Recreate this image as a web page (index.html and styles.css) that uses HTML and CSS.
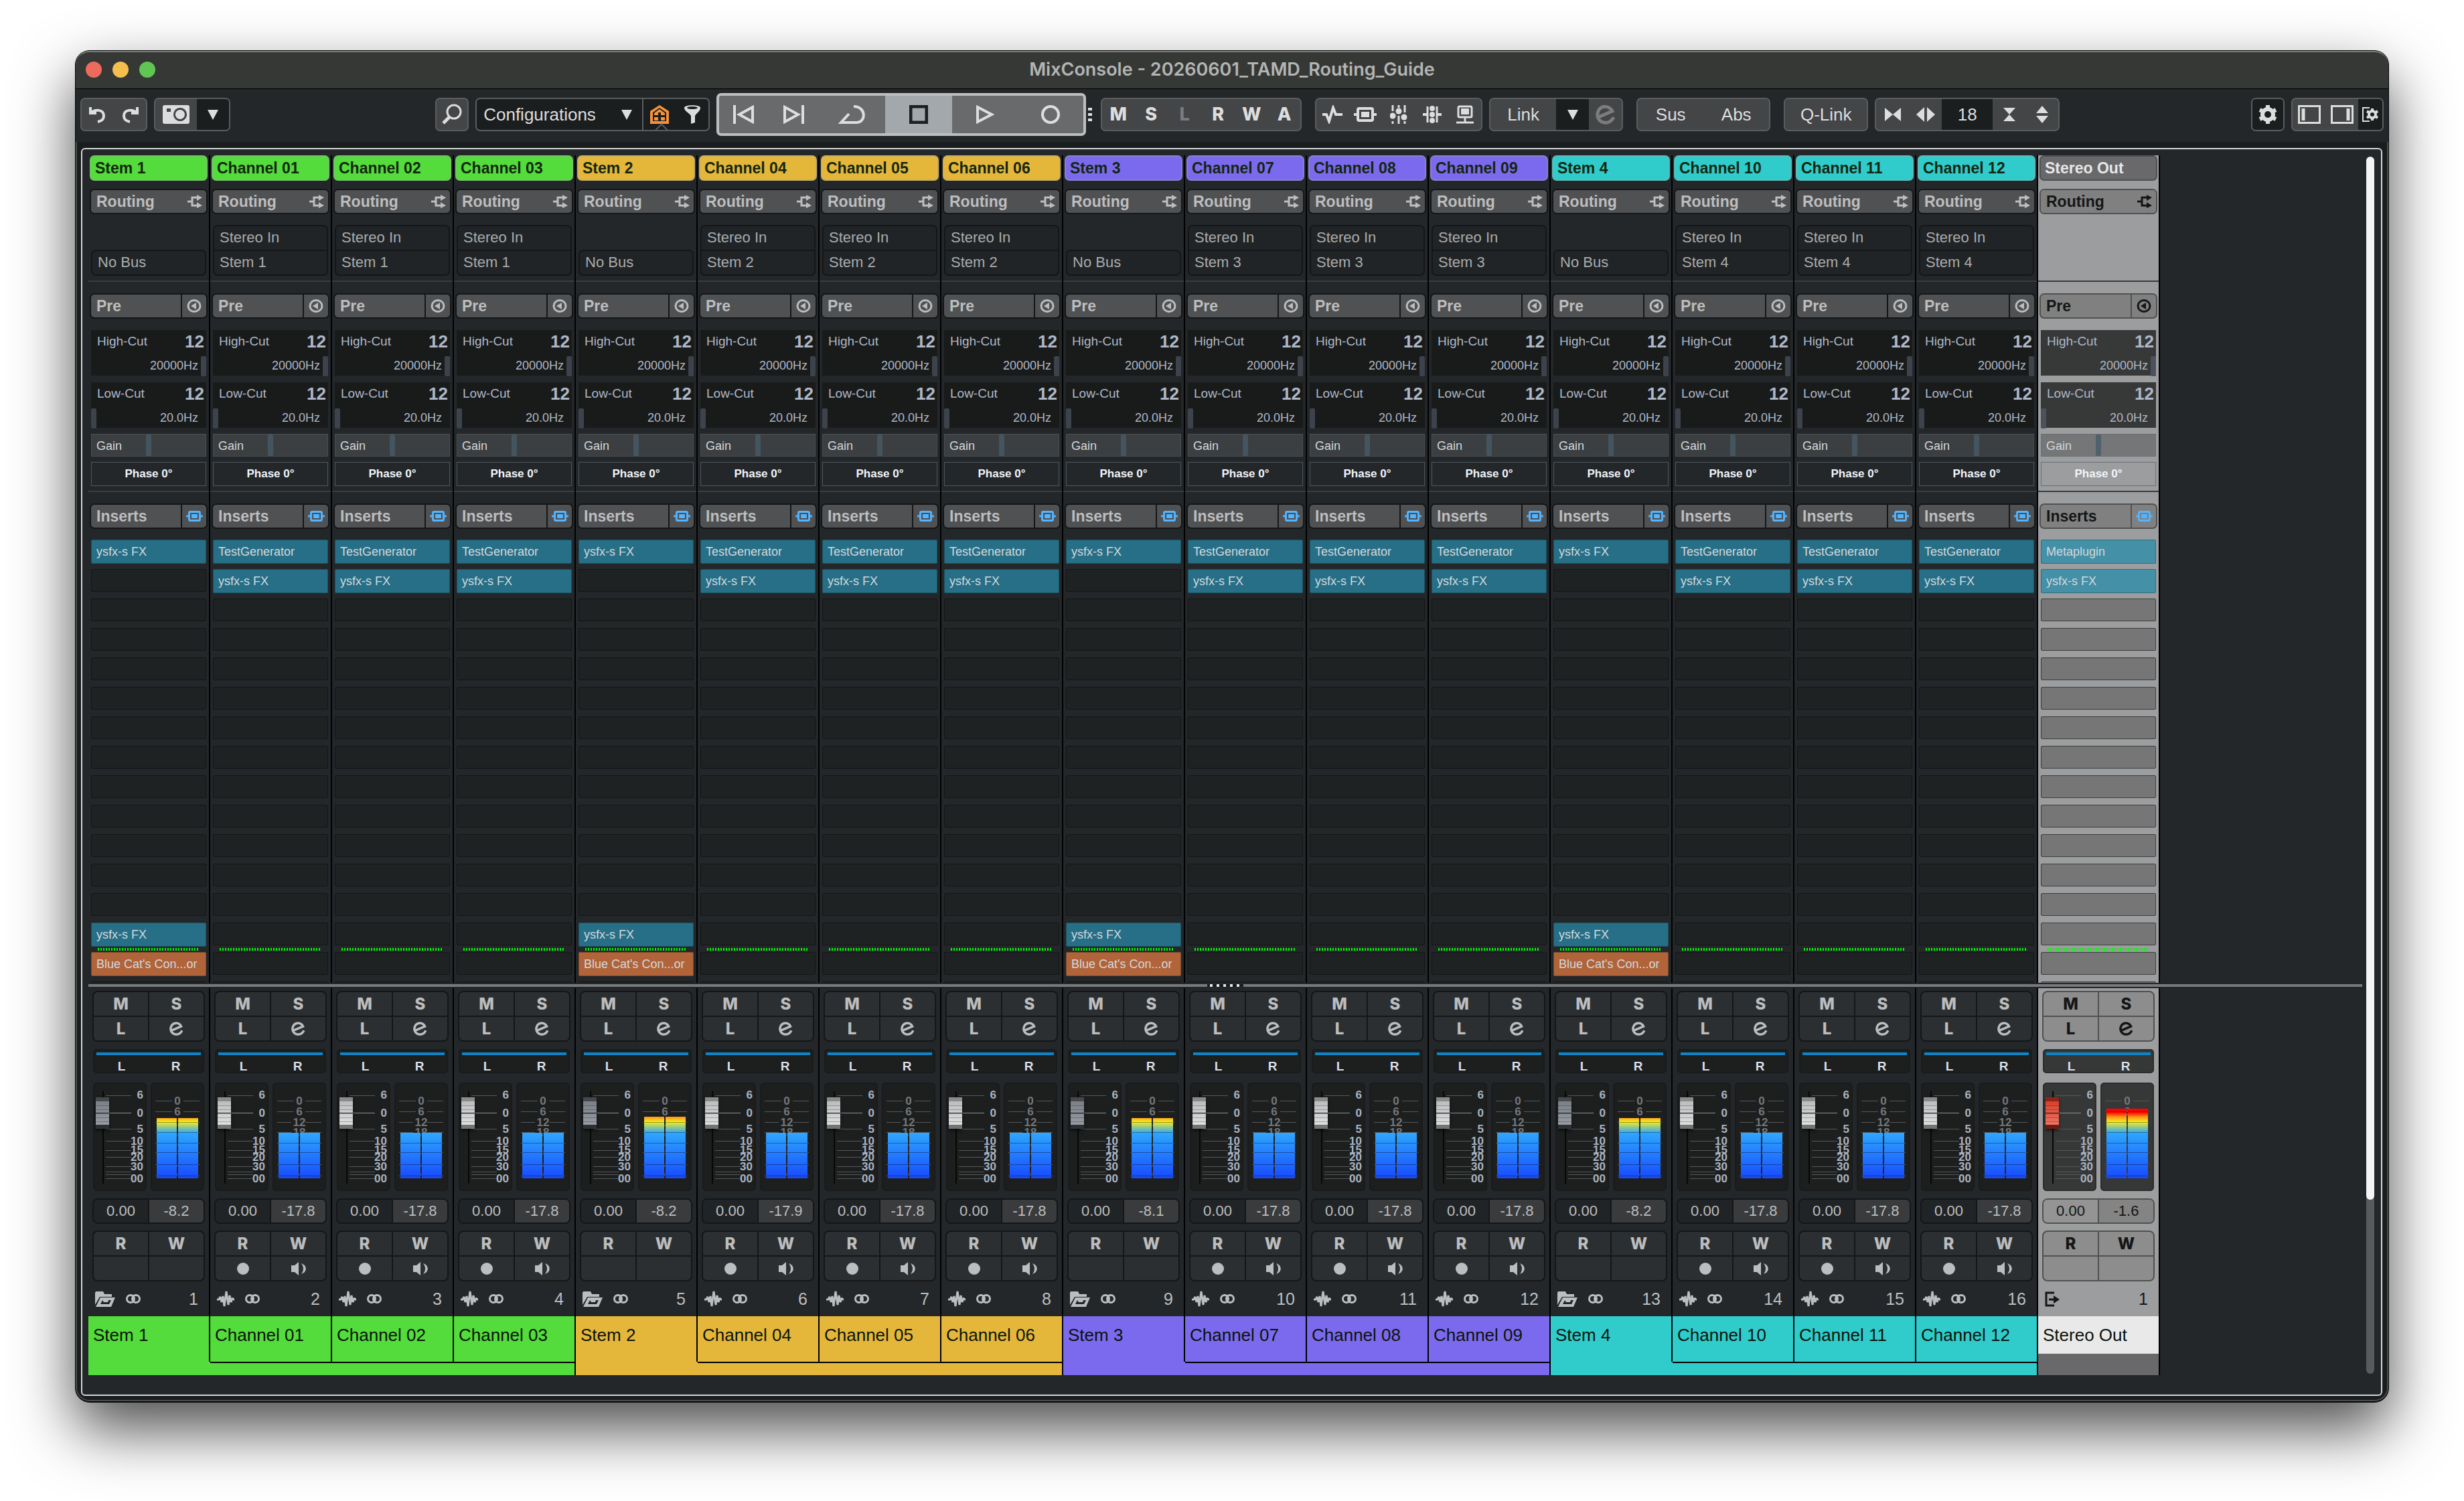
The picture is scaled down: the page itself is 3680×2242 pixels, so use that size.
FILE: index.html
```html
<!DOCTYPE html>
<html lang="en">
<head>
  <meta charset="UTF-8" />
  <meta name="viewport" content="width=device-width, initial-scale=1.0" />
  <title>MixConsole</title>
  <link rel="stylesheet" href="styles.css">
</head>
<body>
  <svg class="defs" aria-hidden="true">
    <defs>
      <linearGradient id="level" gradientUnits="userSpaceOnUse" x1="0" y1="143" x2="0" y2="39">
        <stop offset="0" stop-color="#174bff"/>
        <stop offset=".65" stop-color="#2ea6ff"/>
        <stop offset=".74" stop-color="#9acb84"/>
        <stop offset=".81" stop-color="#f4ee20"/>
        <stop offset=".88" stop-color="#ff9614"/>
        <stop offset=".95" stop-color="#ff0000"/>
      </linearGradient>
    </defs>
    <symbol id="i-undo" viewBox="0 0 26 26"><path d="M2 2v9h9M3 10C9 5 22 5 22 15c0 5-4 8-9 9" fill="none" stroke="currentColor" stroke-width="4"/></symbol>
    <symbol id="i-redo" viewBox="0 0 26 26"><path d="M24 2v9h-9M23 10C17 5 4 5 4 15c0 5 4 8 9 9" fill="none" stroke="currentColor" stroke-width="4"/></symbol>
    <symbol id="i-camera" viewBox="0 0 40 28"><path fill="currentColor" fill-rule="evenodd" d="M3 0h34a3 3 0 0 1 3 3v22a3 3 0 0 1-3 3H3a3 3 0 0 1-3-3V3a3 3 0 0 1 3-3zM6 5v5h6V5zM26 4a10 10 0 1 0 .1 0zM26 7a7 7 0 1 1-.1 0z"/></symbol>
    <symbol id="i-down" viewBox="0 0 16 15"><path d="M0 0h16L8 15z" fill="currentColor"/></symbol>
    <symbol id="i-search" viewBox="0 0 32 32"><circle cx="19" cy="12" r="10" fill="none" stroke="currentColor" stroke-width="3"/><path d="M12 20L3 29" stroke="currentColor" stroke-width="5"/></symbol>
    <symbol id="i-house" viewBox="0 0 28 28"><path fill="currentColor" fill-rule="evenodd" d="M14 0l14 9v19H0V9zM14 4L4 11v13h20V11z"/><path d="M14 6l8 6v3h-6v-4h-4v4H6v-3zM6 18h6v5H6zM16 18h6v5h-6z" fill="currentColor"/></symbol>
    <symbol id="i-funnel" viewBox="0 0 24 28"><path d="M0 4C0-1 24-1 24 4c0 5-6 8-8 12v10l-6 2V16C8 12 0 9 0 4z" fill="currentColor"/><ellipse cx="12" cy="4" rx="8" ry="2" fill="#1b1e1f"/></symbol>
    <symbol id="i-prev" viewBox="0 0 32 28"><path d="M2 0v28M29 3v22L9 14z" fill="none" stroke="currentColor" stroke-width="4"/></symbol>
    <symbol id="i-next" viewBox="0 0 32 28"><path d="M30 0v28M3 3v22l20-11z" fill="none" stroke="currentColor" stroke-width="4"/></symbol>
    <symbol id="i-loop" viewBox="0 0 40 28"><path d="M23 2c19 0 19 24 4 24H4l12-13" fill="none" stroke="currentColor" stroke-width="4"/></symbol>
    <symbol id="i-stop" viewBox="0 0 28 28"><path d="M2 2h24v24H2z" fill="none" stroke="#1d1f20" stroke-width="5"/></symbol>
    <symbol id="i-play" viewBox="0 0 28 28"><path d="M3 3v22l21-11z" fill="none" stroke="currentColor" stroke-width="4"/></symbol>
    <symbol id="i-rec" viewBox="0 0 28 28"><circle cx="14" cy="14" r="12" fill="none" stroke="currentColor" stroke-width="4"/></symbol>
    <symbol id="i-pulse" viewBox="0 0 30 28"><path d="M0 14h6l4 10 6-20 4 10h10" fill="none" stroke="currentColor" stroke-width="4"/></symbol>
    <symbol id="i-insert" viewBox="0 0 34 22"><path d="M0 11h5M29 11h5" stroke="currentColor" stroke-width="4"/><rect x="6" y="2" width="22" height="18" rx="2" fill="none" stroke="currentColor" stroke-width="4"/><path d="M11 7h12v8H11z" fill="currentColor"/></symbol>
    <symbol id="i-faders" viewBox="0 0 26 28"><path d="M4 0v9M4 24v4M13 0v4M13 16v12M22 0v11M22 24v4" stroke="currentColor" stroke-width="3"/><circle cx="4" cy="16" r="4.500" fill="currentColor"/><circle cx="13" cy="9" r="4.500" fill="currentColor"/><circle cx="21" cy="18" r="4.500" fill="currentColor"/></symbol>
    <symbol id="i-strip" viewBox="0 0 28 26"><path d="M0 13h7M21 13h7" stroke="currentColor" stroke-width="4"/><path d="M7 1v24M21 1v24" stroke="currentColor" stroke-width="3"/><circle cx="14" cy="4" r="4" fill="currentColor"/><circle cx="14" cy="13" r="4" fill="currentColor"/><circle cx="14" cy="22" r="4" fill="currentColor"/></symbol>
    <symbol id="i-rackmount" viewBox="0 0 26 28"><rect x="3" y="2" width="20" height="16" rx="2" fill="none" stroke="currentColor" stroke-width="3"/><path d="M7 5h12v9H7z" fill="currentColor"/><path d="M13 18v8M0 26h26" stroke="currentColor" stroke-width="3"/></symbol>
    <symbol id="i-e" viewBox="0 0 30 30"><path d="M4 19L25 10C21 2 10 1 5 8c-5 8-1 18 8 19 6 1 11-2 14-8" fill="none" stroke="currentColor" stroke-width="5"/></symbol>
    <symbol id="i-hin" viewBox="0 0 26 20"><path d="M1 0v20l12-10L25 20V0L13 10z" fill="currentColor"/></symbol>
    <symbol id="i-hout" viewBox="0 0 28 22"><path d="M12 0v22L0 11zM16 0v22l12-11z" fill="currentColor"/></symbol>
    <symbol id="i-vin" viewBox="0 0 18 22"><path d="M0 1h18L9 11zM0 21h18L9 11z" fill="currentColor"/></symbol>
    <symbol id="i-vout" viewBox="0 0 18 26"><path d="M0 11h18L9 0zM0 15h18L9 26z" fill="currentColor"/></symbol>
    <symbol id="i-gear" viewBox="0 0 28 28"><circle cx="14" cy="14" r="8" fill="none" stroke="currentColor" stroke-width="6"/><path d="M14 0v5M14 23v5M2 7l4 2M22 19l4 2M2 21l4-2M22 9l4-2" stroke="currentColor" stroke-width="6"/></symbol>
    <symbol id="i-paneleft" viewBox="0 0 34 28"><path d="M1.500 1.500h31v25h-31z" fill="none" stroke="currentColor" stroke-width="3"/><path d="M8 5v18" stroke="currentColor" stroke-width="5"/></symbol>
    <symbol id="i-paneright" viewBox="0 0 34 28"><path d="M1.500 1.500h31v25h-31z" fill="none" stroke="currentColor" stroke-width="3"/><path d="M26 5v18" stroke="currentColor" stroke-width="5"/></symbol>
    <symbol id="i-panegear" viewBox="0 0 24 22"><path d="M11 1H1v20h10" fill="none" stroke="currentColor" stroke-width="2"/><circle cx="15" cy="11" r="5" fill="none" stroke="currentColor" stroke-width="4"/><path d="M15 2v3M15 17v3M7 6l3 2M20 14l3 2M7 16l3-2M20 8l3-2" stroke="currentColor" stroke-width="4"/></symbol>
    <symbol id="i-routing" viewBox="0 0 22 20"><path d="M0 10h7M16 4H7v12h9" fill="none" stroke="currentColor" stroke-width="3"/><path d="M14 0l8 4-8 5zM14 11l8 5-8 4z" fill="currentColor"/></symbol>
    <symbol id="i-pre" viewBox="0 0 22 20"><ellipse cx="11" cy="10" rx="9" ry="8.500" fill="none" stroke="currentColor" stroke-width="3"/><path d="M14 5v10l-8-5z" fill="currentColor"/></symbol>
    <symbol id="i-folder" viewBox="0 0 30 23"><path d="M1 0h11l2 4h11v4H7L0 20V2z" fill="currentColor"/><path fill="currentColor" fill-rule="evenodd" d="M8 9h22l-6 14H1zM11 13l-3 6h13l3-6h-4l-1 3h-6z"/></symbol>
    <symbol id="i-stereo" viewBox="0 0 22 14"><circle cx="7" cy="7" r="5.500" fill="none" stroke="currentColor" stroke-width="3"/><circle cx="15" cy="7" r="5.500" fill="none" stroke="currentColor" stroke-width="3"/></symbol>
    <symbol id="i-wave" viewBox="0 0 26 24"><path d="M0 13h3l2-4 2 8 2-9 2 15 3-22 3 20 2-14 2 10 2-6 2 2h1" fill="none" stroke="currentColor" stroke-width="3" stroke-linejoin="bevel"/></symbol>
    <symbol id="i-dot" viewBox="0 0 18 18"><circle cx="9" cy="9" r="9" fill="currentColor"/></symbol>
    <symbol id="i-speaker" viewBox="0 0 22 20"><path d="M0 5h5l6-5v20l-6-5H0zM15 2c9 3 9 13 0 16 4-5 4-11 0-16z" fill="currentColor"/></symbol>
    <symbol id="i-out" viewBox="0 0 22 23"><path d="M14 2H2v19h12M6 12h9" fill="none" stroke="currentColor" stroke-width="3"/><path d="M13 6l9 6-9 6z" fill="currentColor"/></symbol>
  </svg>

  <main class="window">
    <header class="titlebar">
      <div class="lights">
        <button class="light close" aria-label="Close"></button>
        <button class="light minimize" aria-label="Minimize"></button>
        <button class="light zoom" aria-label="Zoom"></button>
      </div>
      <h1>MixConsole - 20260601_TAMD_Routing_Guide</h1>
    </header>

    <nav class="toolbar">
      <div class="group w50">
        <button aria-label="Undo"><svg width="26" height="26"><use href="#i-undo"/></svg></button>
        <button aria-label="Redo"><svg width="26" height="26"><use href="#i-redo"/></svg></button>
      </div>
      <div class="group snapshots">
        <button class="camera" aria-label="Snapshot"><svg width="40" height="28"><use href="#i-camera"/></svg></button>
        <button class="dark" aria-label="Snapshots"><svg width="16" height="15"><use href="#i-down"/></svg></button>
      </div>
      <div class="space left"></div>
      <div class="group w50"><button aria-label="Find channel"><svg width="32" height="32"><use href="#i-search"/></svg></button></div>
      <div class="group config">
        <select aria-label="Configurations"><option>Configurations</option></select>
        <svg class="arrow" width="16" height="15"><use href="#i-down"/></svg>
        <button class="house" aria-label="Agents"><svg width="28" height="28"><use href="#i-house"/></svg></button>
        <button aria-label="Filter"><svg width="24" height="28"><use href="#i-funnel"/></svg></button>
      </div>
      <div class="transport">
        <button class="step" aria-label="Previous"><svg width="32" height="28"><use href="#i-prev"/></svg></button>
        <button class="step" aria-label="Next"><svg width="32" height="28"><use href="#i-next"/></svg></button>
        <button class="wide" aria-label="Cycle"><svg width="40" height="28"><use href="#i-loop"/></svg></button>
        <button class="wide on" aria-label="Stop"><svg width="28" height="28"><use href="#i-stop"/></svg></button>
        <button aria-label="Play"><svg width="28" height="28"><use href="#i-play"/></svg></button>
        <button aria-label="Record"><svg width="28" height="28"><use href="#i-rec"/></svg></button>
      </div>
      <div class="grip"><i></i><i></i><i></i></div>
      <div class="group w50 letters">
        <button>M</button><button>S</button><button class="off">L</button><button>R</button><button>W</button><button>A</button>
      </div>
      <div class="group w50 gap20">
        <button aria-label="Pulse"><svg width="30" height="28"><use href="#i-pulse"/></svg></button>
        <button aria-label="Bypass inserts"><svg width="34" height="22"><use href="#i-insert"/></svg></button>
        <button aria-label="Bypass EQ"><svg width="26" height="28"><use href="#i-faders"/></svg></button>
        <button aria-label="Bypass strip"><svg width="28" height="26"><use href="#i-strip"/></svg></button>
        <button aria-label="Bypass sends"><svg width="26" height="28"><use href="#i-rackmount"/></svg></button>
      </div>
      <div class="group link">
        <button class="text">Link</button>
        <button class="dark" aria-label="Link settings"><svg width="16" height="15"><use href="#i-down"/></svg></button>
        <button class="off" aria-label="Edit"><svg width="30" height="30"><use href="#i-e"/></svg></button>
      </div>
      <div class="group gap20 sus"><button class="text">Sus</button><button class="text">Abs</button></div>
      <div class="group gap20 qlink"><button class="text">Q-Link</button></div>
      <div class="group width">
        <button aria-label="Narrower"><svg width="26" height="20"><use href="#i-hin"/></svg></button>
        <button aria-label="Wider"><svg width="28" height="22"><use href="#i-hout"/></svg></button>
        <input type="text" value="18" aria-label="Channel width">
        <button aria-label="Shrink rack"><svg width="18" height="22"><use href="#i-vin"/></svg></button>
        <button aria-label="Grow rack"><svg width="18" height="26"><use href="#i-vout"/></svg></button>
      </div>
      <div class="space right"></div>
      <div class="group w50"><button class="dark" aria-label="Settings"><svg width="28" height="28"><use href="#i-gear"/></svg></button></div>
      <div class="group panes">
        <button aria-label="Left zone"><svg width="34" height="28"><use href="#i-paneleft"/></svg></button>
        <button aria-label="Right zone"><svg width="34" height="28"><use href="#i-paneright"/></svg></button>
        <button class="dark" aria-label="Set up window layout"><svg width="24" height="22"><use href="#i-panegear"/></svg></button>
      </div>
    </nav>

    <section class="console">
      <div class="mixer">
        <div class="row racks" id="racks"></div>
        <div class="divider"><span></span></div>
        <div class="row" id="faders"></div>
      </div>
      <div class="scrollbar"><div class="thumb"></div></div>
    </section>
  </main>
  <script src="script.js"></script>
</body>
</html>
```
FILE: styles.css
```css
* {
  box-sizing: border-box;
}
body {
  min-height: 100vh;
  margin: 0;
  padding: 75px 112px 0;
  background: #fff;
  font-family: "Liberation Sans", Arial, sans-serif;
}
button, input, select {
  margin: 0;
  padding: 0;
  border: 0;
  border-radius: 0;
  background: none;
  color: inherit;
  font: inherit;
  appearance: none;
}
svg {
  display: block;
  flex: none;
}
.defs {
  position: absolute;
  width: 0;
  height: 0;
}

/* window */
.window {
  padding-bottom: 8px;
  border: 1px solid #050606;
  border-bottom-width: 2px;
  border-radius: 22px;
  background: #1a1d1e;
  box-shadow: inset 0 2px 1px #7f837f, inset 0 0 0 2px #4a4d4e, 0 40px 90px rgba(0, 0, 0, 0.7);
}
.titlebar {
  position: relative;
  display: flex;
  align-items: center;
  height: 57px;
  padding: 0 0 2px 15px;
  border-top: 2px solid #7b7f7b;
  border-bottom: 1px solid #000;
  border-radius: 21px 21px 0 0;
  background: #363836;
}
.titlebar h1 {
  flex: 1;
  margin: 0 135px 0 0;
  color: #b3b5b3;
  font: 600 27px/30px Inter, sans-serif;
  text-align: center;
}
.lights {
  display: flex;
  gap: 16px;
  width: 120px;
}
.light {
  width: 24px;
  height: 24px;
  border-radius: 50%;
}
.close { background: #ed6a5e; }
.minimize { background: #f5bf4f; }
.zoom { background: #61c554; }

/* toolbar */
.toolbar {
  display: flex;
  align-items: center;
  height: 79px;
  padding: 0 7px 3px;
  background: #23272a;
  color: #dcdddd;
  font-size: 26px;
}
.group {
  display: flex;
  height: 50px;
  margin-left: 10px;
  border: 2px solid #5a5d5e;
  border-radius: 7px;
  background: #444547;
  overflow: hidden;
}
.group:first-child { margin-left: 0; }
.group.gap20 { margin-left: 20px; }
.group button, .transport button {
  display: flex;
  align-items: center;
  justify-content: center;
  flex: 1;
}
.group .dark, .group.config { background: #1b1e1f; }
.group .off { color: #7b7c7e; }
.w50 button { flex: 0 0 50px; }
.w50 button:first-child, .w50 button:last-child { flex-basis: 48px; }
.w50 button:only-child { flex-basis: 46px; }
.space.left { flex: 15; margin-right: -10px; }
.space.right { flex: 14; margin-right: -10px; }
.snapshots { width: 114px; }
.snapshots .camera { flex: 0 0 62px; }
.config { width: 350px; }
.config select {
  width: 205px;
  padding-left: 10px;
}
.config .arrow {
  align-self: center;
  margin: 0 15px 0 11px;
}
.config .house {
  position: relative;
  border-left: 2px solid #5a5d5e;
  color: #f5923a;
}
.config .house::after {
  content: "";
  position: absolute;
  left: 20px;
  bottom: -7px;
  width: 10px;
  height: 10px;
  border: 2px solid #5a5d5e;
  transform: rotate(45deg);
}
.transport {
  display: flex;
  width: 552px;
  height: 64px;
  margin-left: 10px;
  border: 4px solid #bdbebe;
  border-radius: 7px;
  background: #696a6c;
}
.transport .step { flex: 0 0 74px; }
.transport .wide { flex: 0 0 100px; }
.transport .on { background: #a3a8ac; }
.grip {
  display: grid;
  gap: 4px;
  width: 6px;
  margin: 0 3px;
}
.grip i {
  height: 4px;
  background: #dcdddd;
}
.letters { font: 800 27px/46px Inter, sans-serif; }
.link { width: 200px; }
.link .text { flex: 0 0 98px; }
.sus { width: 200px; }
.qlink { width: 126px; }
.width { width: 276px; }
.width input {
  width: 76px;
  background: #1b1e1f;
  text-align: center;
}
.panes { width: 138px; }
.panes .dark { flex: 0 0 36px; }

/* console */
.console {
  display: flex;
  justify-content: space-between;
  margin: 9px 9px 0 8px;
  padding: 9px 10px 29px 9px;
  border: 2px solid #d4d5d6;
  border-radius: 6px;
  background: #23272a;
}
.mixer {
  flex: 1;
  margin-right: 6px;
}
.row { display: flex; }
.racks {
  height: 1236px;
  overflow: hidden;
}
.divider {
  display: flex;
  align-items: center;
  justify-content: center;
  height: 8px;
  border: solid #23272a;
  border-width: 2px 0;
  background: #77797b;
}
.divider span {
  width: 54px;
  height: 4px;
  background: repeating-linear-gradient(90deg, #1a1c1d 0 4px, #e4e5e6 4px 8px, #1a1c1d 8px 10px);
}
.scrollbar {
  width: 12px;
  margin: 2px 0;
  border-radius: 6px;
  background: #585b5d;
}
.scrollbar .thumb {
  height: 1558px;
  border-radius: 6px;
  background: #f4f4f4;
}

/* one channel, upper half */
.strip {
  --line: #141618;
  --head: #505153;
  --text: #bcbdbe;
  --box: #191b1a;
  --gain: #3c3f41;
  --slot: #1f2223;
  --slot-line: #131516;
  --fx: #266f86;
  --pad: #2c2f31;
  --well: #1d1f1e;
  --well-line: #191b1c;
  flex: none;
  width: 182px;
  border-right: 2px solid #000;
  background: #23272a;
  color: var(--text);
}
.strip.output {
  --line: #505251;
  --head: #7f807f;
  --text: #151616;
  --box: #373938;
  --gain: #757678;
  --slot: #767676;
  --slot-line: #3c3d3d;
  --fx: #4490a6;
  --pad: #8c8d8c;
  --well: #363837;
  --well-line: #2b2d2d;
  background: #9c9d9f;
}
.label {
  height: 38px;
  margin: 0 2px;
  padding-left: 6px;
  border: 2px solid rgba(160, 160, 160, 0.4);
  border-radius: 7px;
  background: var(--color);
  color: #14260f;
  font: bold 23px/34px "Liberation Sans", sans-serif;
}
.output .label {
  border-color: #4f5051;
  color: #e6e7e8;
}
.section {
  padding: 17px 0 7px;
  border-bottom: 2px solid #3a3c3f;
}
.section.routing { padding-top: 12px; }
.section.inserts { border: 0; }
.head {
  display: flex;
  gap: 2px;
  height: 38px;
  margin: 0 2px;
  border: 2px solid var(--line);
  border-radius: 7px;
  background: var(--line);
  overflow: hidden;
}
.head button {
  display: flex;
  align-items: center;
  justify-content: center;
  width: 36px;
  background: var(--head);
}
.head .title {
  flex: 1;
  justify-content: flex-start;
  padding-left: 8px;
  font: bold 23px/34px "Liberation Sans", sans-serif;
}
.head .title svg { margin: 0 6px 0 auto; }
.head .blue { color: #53b4ff; }
.buses {
  display: flex;
  flex-direction: column;
  justify-content: flex-end;
  height: 76px;
  margin: 16px 4px 0;
}
.buses button {
  height: 39px;
  padding: 0 0 1px 8px;
  border: 2px solid #141618;
  border-radius: 0 0 7px 7px;
  background: #212426;
  color: #a9abac;
  font-size: 22px;
  text-align: left;
}
.buses button:first-child { border-radius: 7px 7px 0 0; }
.buses button:only-child { border-radius: 7px; }
.buses button + button { margin-top: -2px; }
.filter {
  height: 68px;
  margin: 17px 4px 0;
  background: var(--box);
  color: #aeb8c8;
}
.filter + .filter { margin-top: 10px; }
.filter .top {
  display: flex;
  justify-content: space-between;
  padding: 3px 3px 0 9px;
  font-size: 19px;
  line-height: 28px;
}
.filter b { font-size: 26px; }
.slide {
  display: grid;
  align-items: center;
}
.slide > * { grid-area: 1 / 1; }
.filter .slide {
  height: 30px;
  margin-top: 8px;
}
.filter output {
  padding: 0 12px 2px 0;
  font-size: 18px;
  text-align: right;
}
.slide input {
  width: 100%;
  height: 100%;
}
.slide input::-webkit-slider-thumb {
  width: 8px;
  height: 30px;
  border-radius: 2px;
  background: #3d434c;
  appearance: none;
}
.output .slide input::-webkit-slider-thumb { background: #4c525c; }
.gain {
  height: 34px;
  margin: 9px 4px 0;
  border: 1px solid #4a4e51;
  background: var(--gain);
  color: #d3d6da;
  font-size: 18px;
}
.gain label { padding: 3px 0 0 7px; }
.gain.slide input::-webkit-slider-thumb {
  height: 32px;
  background: #445560;
}
.output .gain { border-color: #6c6e70; }
.output .gain.slide input::-webkit-slider-thumb { background: #4f616b; }
.phase {
  display: block;
  width: 172px;
  height: 36px;
  margin: 8px 4px 0;
  border: 1px solid #4d575e;
  color: #f2f5fa;
  font-size: 17px;
  font-weight: bold;
}
.output .phase { border-color: #66717a; }
.slots {
  display: grid;
  grid-auto-rows: 44px;
  align-items: start;
  margin: 16px 4px 0;
}
.slot {
  position: relative;
  height: 34px;
  padding-left: 7px;
  border: 1px solid var(--slot-line);
  border-radius: 2px;
  background: var(--slot);
  color: #d3d8dd;
  font-size: 18px;
  text-align: left;
}
.slot.fx {
  height: 36px;
  border-color: rgba(0, 0, 0, 0.25);
  background: var(--fx);
}
.slot.fx.alt { background: #b16439; }
.slot.post::before {
  content: "";
  position: absolute;
  top: -7px;
  left: 9px;
  width: 150px;
  height: 4px;
  background: repeating-linear-gradient(90deg, #06f506 0 2px, transparent 2px 4px);
}

/* one channel, lower half */
.controls { padding: 4px 6px 0; }
.pads {
  display: grid;
  grid-template: 35px 35px / 1fr 1fr;
  gap: 2px;
  border: 2px solid var(--line);
  border-radius: 8px;
  background: var(--line);
  font: 800 24px/35px Inter, sans-serif;
  overflow: hidden;
}
.pads button {
  display: flex;
  align-items: center;
  justify-content: center;
  background: var(--pad);
}
.pan {
  display: grid;
  grid-template-columns: 1fr 1fr;
  height: 36px;
  margin: 11px 1px 0;
  padding-top: 3px;
  border: 2px solid var(--well-line);
  border-radius: 5px;
  background: var(--well);
  color: #d9dee8;
  font-size: 19px;
  font-weight: bold;
  line-height: 30px;
  text-align: center;
}
.pan::before {
  content: "";
  grid-column: 1 / 3;
  height: 4px;
  margin: 0 3px;
  background: #0c86ca;
}
.pan span { height: 22px; }
.levels {
  display: flex;
  gap: 6px;
  margin: 14px 1px 11px;
}
.well {
  position: relative;
  flex: 1;
  height: 162px;
  border-radius: 6px;
  background: var(--well);
  box-shadow: inset 0 0 0 2px var(--well-line);
}
.well svg {
  width: 80px;
  height: 162px;
  font-size: 17px;
  font-weight: bold;
}
.ticks { stroke: #54575a; stroke-width: 1; }
.ticks .zero { stroke: #8d949b; }
.scale { fill: #a9b3c2; text-anchor: end; }
.peaks { fill: #74777c; text-anchor: middle; }
.cuts { stroke: rgba(0, 0, 0, 0.35); stroke-width: 1; }
.fader {
  --edge: #8a8b8c;
  --top: #bcbdbe;
  --bottom: #dedfdf;
  --foot: #737475;
  position: absolute;
  top: 13px;
  left: 4px;
  width: 20px;
  height: 138px;
  writing-mode: vertical-lr;
  direction: rtl;
}
.fader::-webkit-slider-thumb {
  width: 20px;
  height: 47px;
  background:
    linear-gradient(#222, #222) 0 23px / 100% 1px no-repeat,
    repeating-linear-gradient(transparent 0 5px, rgba(0, 0, 0, 0.25) 5px 6px) 0 7px / 100% 33px no-repeat,
    linear-gradient(var(--edge) 0 6px, var(--top) 6px, var(--bottom) 41px, var(--foot) 41px);
  box-shadow: 0 3px 4px rgba(0, 0, 0, 0.5);
  appearance: none;
}
.stem .fader {
  --edge: #47484c;
  --top: #7a8088;
  --bottom: #989ca2;
  --foot: #2d2f33;
}
.output .fader {
  --edge: #8e2415;
  --top: #d9402a;
  --bottom: #ee7564;
  --foot: #701b10;
}
.values {
  display: flex;
  height: 38px;
  margin-bottom: 10px;
  border: 2px solid var(--line);
  border-radius: 8px;
  overflow: hidden;
  font-size: 22px;
  line-height: 34px;
  text-align: center;
}
.values input {
  width: 83px;
  border-right: 2px solid var(--line);
  background: #212426;
  text-align: center;
}
.values output {
  flex: 1;
  background: #3a3b3d;
}
.output .values input { background: #939493; }
.output .values output { background: #838483; }
.info {
  display: flex;
  align-items: center;
  gap: 16px;
  height: 52px;
  padding: 0 10px 0 4px;
  font-size: 25px;
}
.info span { margin-left: auto; }
.strip.lower { border: 0; }
.strip.lower .controls { border-right: 2px solid #000; }
.name {
  height: 68px;
  padding: 13px 0 0 7px;
  border-right: 2px solid #000;
  background: var(--color);
  color: #0b130a;
  font-size: 26px;
  line-height: 30px;
}
.tail {
  height: 20px;
  border-top: 2px solid #000;
  background: var(--color);
}
.stem .tail { border-color: var(--color); }
.last .tail { border-right: 2px solid #000; }
.output .name {
  height: 56px;
  background: #e9e9e9;
}
.output .tail {
  height: 32px;
  border-top: 0;
}

.green { --color: #53dc3b; }
.yellow { --color: #e4b73b; }
.violet { --color: #7b6aed; }
.cyan { --color: #30cccc; }
.grey { --color: #69696b; }
```
FILE: script.js
```js
const icon = (id, w, h) => `<svg width="${w}" height="${h}"><use href="#i-${id}"/></svg>`;

// build the 16 channels + stereo out
const strips = [];
const stemPeaks = ['-8.2', '-8.2', '-8.1', '-8.2'];
['green', 'yellow', 'violet', 'cyan'].forEach((color, g) => {
  strips.push({ type: 'stem', name: 'Stem ' + (g + 1), color, peak: stemPeaks[g], top: g === 1 ? 51 : 53, buses: ['No Bus'] });
  for (let i = 1; i <= 3; i++) {
    const n = g * 3 + i;
    strips.push({
      type: i === 3 ? 'audio last' : 'audio',
      name: 'Channel ' + String(n).padStart(2, '0'),
      color,
      peak: n === 4 ? '-17.9' : '-17.8',
      top: 75,
      buses: ['Stereo In', 'Stem ' + (g + 1)]
    });
  }
});
strips.forEach((s, i) => { s.number = i + 1; });
strips.push({ type: 'output last', name: 'Stereo Out', color: 'grey', peak: '-1.6', top: 39, buses: [], number: 1 });

function slots(s) {
  const fx = {
    stem: { 0: 'ysfx-s FX', 13: 'ysfx-s FX', 14: "Blue Cat's Con...or" },
    audio: { 0: 'TestGenerator', 1: 'ysfx-s FX' },
    output: { 0: 'Metaplugin', 1: 'ysfx-s FX' }
  }[s.type.split(' ')[0]];
  let html = '';
  for (let i = 0; i < 16; i++) {
    const cls = (fx[i] ? ' fx' : '') + (fx[i] && i === 14 ? ' alt' : '') + (i === 14 ? ' post' : '');
    html += `<button class="slot${cls}" aria-label="Insert ${i + 1}">${fx[i] || ''}</button>`;
  }
  return html;
}

function filter(s, name, value, pos) {
  const id = `${name}-${s.name}`.replace(/ /g, '');
  return `<div class="filter">
    <div class="top"><label for="${id}">${name}</label><b>12</b></div>
    <div class="slide"><output>${value}</output><input id="${id}" type="range" value="${pos}"></div>
  </div>`;
}

function rack(s) {
  const gain = 'gain-' + s.name.replace(/ /g, '');
  return `<div class="strip ${s.type} ${s.color}">
    <div class="label">${s.name}</div>
    <div class="section routing">
      <div class="head"><button class="title">Routing${icon('routing', 22, 20)}</button></div>
      <div class="buses">${s.buses.map(b => `<button>${b}</button>`).join('')}</div>
    </div>
    <div class="section">
      <div class="head"><button class="title">Pre</button><button aria-label="Pre bypass">${icon('pre', 22, 20)}</button></div>
      ${filter(s, 'High-Cut', '20000Hz', 100)}
      ${filter(s, 'Low-Cut', '20.0Hz', 0)}
      <div class="gain slide"><input id="${gain}" type="range" value="50"><label for="${gain}">Gain</label></div>
      <button class="phase">Phase 0°</button>
    </div>
    <div class="section inserts">
      <div class="head"><button class="title">Inserts</button><button class="blue" aria-label="Inserts bypass">${icon('insert', 25, 16)}</button></div>
      <div class="slots">${slots(s)}</div>
    </div>
  </div>`;
}

function faderScale() {
  const marks = [['6', 18], ['0', 45], ['5', 69], ['10', 87], ['15', 100], ['20', 111], ['30', 125], ['00', 143]];
  const lines = [19, 45, 69, 87, 101, 111, 125, 133, 137, 143];
  return `<svg>
    <rect x="14" y="13" width="2" height="138" fill="#060707"/>
    <g class="ticks">${lines.map(y => `<path${y === 45 ? ' class="zero"' : ''} d="M19 ${y + 0.5}h38"/>`).join('')}</g>
    <g class="scale">${marks.map(([t, y]) => `<text x="75" y="${y + 6}">${t}</text>`).join('')}</g>
  </svg>`;
}

function meter(top) {
  const marks = [['0', 27], ['6', 43], ['12', 59], ['18', 74], ['24', 90], ['30', 104], ['40', 122], ['50', 139]];
  const h = 143 - top;
  return `<svg>
    <g class="ticks">${marks.map(([t, y]) => `<path d="M7 ${y + 0.5}h${t.length > 1 ? 21 : 25}M49 ${y + 0.5}h24"/>`).join('')}</g>
    <g class="peaks">${marks.map(([t, y]) => `<text x="40" y="${Math.min(y + 6, 142)}">${t}</text>`).join('')}</g>
    <g fill="url(#level)"><rect x="9" y="${top}" width="30" height="${h}"/><rect x="41" y="${top}" width="30" height="${h}"/></g>
    <g class="cuts">${marks.filter(m => m[1] > top).map(m => `<path d="M9 ${m[1] + 0.5}h30m2 0h30"/>`).join('')}</g>
  </svg>`;
}

function lower(s) {
  const audio = s.type.startsWith('audio');
  const kind = s.type.startsWith('output')
    ? icon('out', 22, 23)
    : (audio ? icon('wave', 26, 24) : icon('folder', 30, 23)) + icon('stereo', 22, 14);
  return `<div class="strip lower ${s.type} ${s.color}">
    <div class="controls">
      <div class="pads"><button>M</button><button>S</button><button>L</button><button aria-label="Edit">${icon('e', 21, 21)}</button></div>
      <div class="pan"><span>L</span><span>R</span></div>
      <div class="levels">
        <div class="well">${faderScale()}<input class="fader" type="range" value="90" aria-label="Volume"></div>
        <div class="well">${meter(s.top)}</div>
      </div>
      <div class="values"><input type="text" value="0.00" aria-label="Volume value"><output>${s.peak}</output></div>
      <div class="pads">
        <button>R</button><button>W</button>
        <button aria-label="Record enable">${audio ? icon('dot', 18, 18) : ''}</button>
        <button aria-label="Monitor">${audio ? icon('speaker', 22, 20) : ''}</button>
      </div>
      <div class="info">${kind}<span>${s.number}</span></div>
    </div>
    <div class="name">${s.name}</div>
    <div class="tail"></div>
  </div>`;
}

document.getElementById('racks').innerHTML = strips.map(rack).join('');
document.getElementById('faders').innerHTML = strips.map(lower).join('');
```
